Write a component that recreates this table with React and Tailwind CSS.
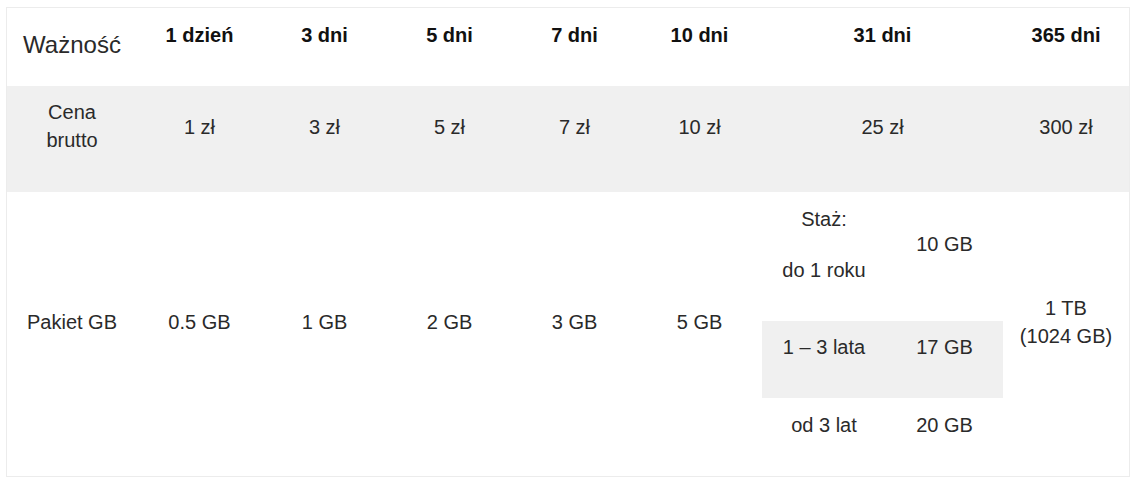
import React from "react";

const cols = ["1 dzień", "3 dni", "5 dni", "7 dni", "10 dni", "31 dni", "365 dni"];
const prices = ["1 zł", "3 zł", "5 zł", "7 zł", "10 zł", "25 zł", "300 zł"];
const packs = ["0.5 GB", "1 GB", "2 GB", "3 GB", "5 GB"];

const grid = "grid grid-cols-[130px_125px_125px_125px_125px_125px_241px_1fr]";

const App = () => {
  return (
    <div className="w-[1136px] h-[486px] bg-white pl-[6px] pt-[7px] font-['Liberation_Sans',Arial,sans-serif] text-[20px] leading-[28px] text-[#2a2a2a]">
      <div className="w-[1124px] h-[470px] border border-[#ececec]">
        {/* naglowek */}
        <div className={`${grid} h-[78px]`}>
          <div className="text-center text-[24px] pt-[23px]">Ważność</div>
          {cols.map((c) => (
            <div key={c} className="text-center font-bold text-[#111] pt-[13px]">
              {c}
            </div>
          ))}
        </div>

        {/* cena */}
        <div className={`${grid} h-[106px] bg-[#f0f0f0] items-center`}>
          <div className="text-center pb-[26px]">
            Cena
            <br />
            brutto
          </div>
          {prices.map((p) => (
            <div key={p} className="text-center pb-[24px]">
              {p}
            </div>
          ))}
        </div>

        {/* pakiet */}
        <div className={`${grid} h-[284px]`}>
          <div className="flex items-center justify-center pb-[25px]">Pakiet GB</div>
          {packs.map((p) => (
            <div key={p} className="flex items-center justify-center pb-[25px]">
              {p}
            </div>
          ))}
          <div className="grid grid-rows-[129px_77px_1fr] grid-cols-[124px_1fr]">
            <div className="flex flex-col items-center pt-[13px] gap-[23px]">
              <span>Staż:</span>
              <span>do 1 roku</span>
            </div>
            <div className="flex items-center justify-center pb-[25px]">10 GB</div>
            <div className="text-center pt-[12px] bg-[#f0f0f0]">1 – 3 lata</div>
            <div className="text-center pt-[12px] bg-[#f0f0f0]">17 GB</div>
            <div className="text-center pt-[13px]">od 3 lat</div>
            <div className="text-center pt-[13px]">20 GB</div>
          </div>
          <div className="flex items-center justify-center text-center pb-[25px]">
            1 TB
            <br />
            (1024 GB)
          </div>
        </div>
      </div>
    </div>
  );
};

export default App;
